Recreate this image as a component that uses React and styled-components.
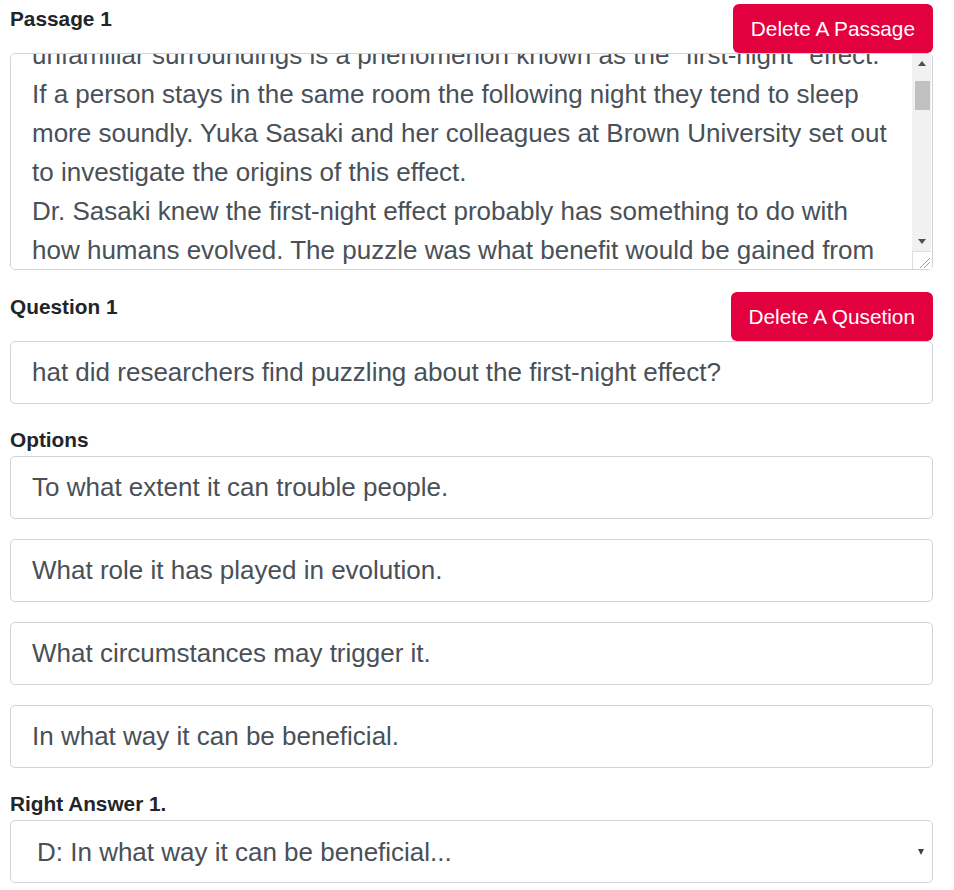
import React, { useLayoutEffect, useRef } from "react";
import styled, { createGlobalStyle } from "styled-components";

const GlobalStyle = createGlobalStyle`
  html, body {
    margin: 0;
    padding: 0;
    background: #ffffff;
  }
  body {
    font-family: "Liberation Sans", Arial, sans-serif;
    color: #212529;
  }
  * {
    box-sizing: border-box;
  }
`;

const passage = `Most of us have had a poor night's sleep in a hotel. Sleeping badly in unfamiliar surroundings is a phenomenon known as the "first-night" effect. If a person stays in the same room the following night they tend to sleep more soundly. Yuka Sasaki and her colleagues at Brown University set out to investigate the origins of this effect.
Dr. Sasaki knew the first-night effect probably has something to do with how humans evolved. The puzzle was what benefit would be gained from having disturbed sleep. The solution, she thought, might be related to another strange aspect of sleep that some animals display, in which half of the brain stays awake while the other half sleeps. Birds and dolphins are known to sleep this way, keeping one eye open so that they can watch out for danger.
Dr. Sasaki wondered whether something similar happens in people who sleep in a new place. To find out, she and her team recruited volunteers and recorded their brain activity while they slept in the laboratory on two nights, a week apart. They found that during the first night, a network of brain regions in the left hemisphere was more active than the same network in the right hemisphere. On the second night, the difference disappeared.
The team then played irregular beeps to the sleepers' ears. The left hemisphere responded more strongly to these sounds on the first night, and the volunteers were more likely to wake up and act quickly when the beeps were played to the right ear, which sends signals to the left side of the brain.
These results suggest that the left side of the brain stays partly awake on the first night in a new place, acting as a night watchman that keeps an eye out for anything unusual. Dr. Sasaki believes that this helps to explain why people feel so tired after a night away from home.`;

const options = [
  "To what extent it can trouble people.",
  "What role it has played in evolution.",
  "What circumstances may trigger it.",
  "In what way it can be beneficial.",
];

const Page = styled.main`
  width: 954px;
  padding: 4px 21px 0 10px;
`;

const HeaderRow = styled.div`
  display: flex;
  justify-content: space-between;
  align-items: flex-start;
`;

const Label = styled.label`
  display: block;
  font-size: 20.8px;
  font-weight: 700;
  color: #212529;
  line-height: ${(p) => (p.$tall ? "32px" : "30px")};
`;

const DangerButton = styled.button`
  height: 49px;
  padding: 0 18px;
  border: none;
  border-radius: 6px;
  background: #e3003f;
  color: #ffffff;
  font-family: "Liberation Sans", Arial, sans-serif;
  font-size: 20.8px;
  cursor: pointer;
`;

const PassageBox = styled.div`
  position: relative;
  margin: 0 0 22px;
`;

const PassageArea = styled.textarea`
  display: block;
  width: 100%;
  height: 217px;
  margin: 0;
  padding: 10px 40px 10px 21px;
  border: 1px solid #ced4da;
  border-radius: 5px;
  font-family: "Liberation Sans", Arial, sans-serif;
  font-size: 26px;
  line-height: 39px;
  color: #495057;
  resize: none;
  outline: none;
`;

/* classic scrollbar drawn over the textarea's right edge */
const Scrollbar = styled.div`
  position: absolute;
  top: 1px;
  right: 2px;
  bottom: 1px;
  width: 19px;
  display: flex;
  flex-direction: column;
  pointer-events: none;
`;

const ScrollButton = styled.div`
  height: 19px;
  flex: none;
  background: #f1f1f1;
  display: flex;
  align-items: center;
  justify-content: center;

  &::after {
    content: "";
    width: 0;
    height: 0;
    border-left: 4.5px solid transparent;
    border-right: 4.5px solid transparent;
    ${(p) =>
      p.$down
        ? "border-top: 5px solid #505050;"
        : "border-bottom: 5px solid #505050;"}
  }
`;

const Track = styled.div`
  flex: 1;
  background: #f1f1f1;
  padding: 8px 1px 0 3px;
`;

const Thumb = styled.div`
  height: 29px;
  background: #c1c1c1;
`;

const Corner = styled.div`
  height: 18px;
  flex: none;
  background: #ffffff;
  border-left: 1px solid #dedede;
  border-top: 1px solid #dedede;
  display: flex;
  align-items: flex-end;
  justify-content: flex-end;
`;

const TextField = styled.input`
  display: block;
  width: 100%;
  height: 63px;
  margin: 0 0 20px;
  padding: 0 21px;
  border: 1px solid #ced4da;
  border-radius: 5px;
  font-family: "Liberation Sans", Arial, sans-serif;
  font-size: 26px;
  color: #495057;
  background: #ffffff;
  outline: none;
`;

const SelectWrap = styled.div`
  position: relative;
`;

const Select = styled.select`
  display: block;
  width: 100%;
  height: 63px;
  margin: 0;
  padding: 0 30px 0 26px;
  border: 1px solid #ced4da;
  border-radius: 5px;
  font-family: "Liberation Sans", Arial, sans-serif;
  font-size: 26px;
  color: #495057;
  background: #ffffff;
  appearance: none;
  -webkit-appearance: none;
  outline: none;
`;

const SelectArrow = styled.span`
  position: absolute;
  right: 9px;
  top: 50%;
  margin-top: -3px;
  width: 0;
  height: 0;
  border-left: 3.5px solid transparent;
  border-right: 3.5px solid transparent;
  border-top: 6px solid #3c4046;
  pointer-events: none;
`;

export default function App() {
  const areaRef = useRef(null);

  useLayoutEffect(() => {
    if (areaRef.current) areaRef.current.scrollTop = 67;
  }, []);

  return (
    <Page>
      <GlobalStyle />
      <HeaderRow>
        <Label>Passage 1</Label>
        <DangerButton>Delete A Passage</DangerButton>
      </HeaderRow>
      <PassageBox>
        <PassageArea ref={areaRef} defaultValue={passage} />
        <Scrollbar aria-hidden="true">
          <ScrollButton />
          <Track>
            <Thumb />
          </Track>
          <ScrollButton $down />
          <Corner>
            <svg width="17" height="17" viewBox="0 0 17 17">
              <path d="M6 16 L16 6 M10 16 L16 10" stroke="#9c9c9c" strokeWidth="1" fill="none" />
            </svg>
          </Corner>
        </Scrollbar>
      </PassageBox>

      <HeaderRow>
        <Label>Question 1</Label>
        <DangerButton>Delete A Qusetion</DangerButton>
      </HeaderRow>
      <TextField defaultValue="hat did researchers find puzzling about the first-night effect?" />

      <Label $tall>Options</Label>
      {options.map((o) => (
        <TextField key={o} defaultValue={o} />
      ))}

      <Label $tall>Right Answer 1.</Label>
      <SelectWrap>
        <Select defaultValue="D">
          <option value="A">A: To what extent it can trouble people...</option>
          <option value="B">B: What role it has played in evolution...</option>
          <option value="C">C: What circumstances may trigger it...</option>
          <option value="D">D: In what way it can be beneficial...</option>
        </Select>
        <SelectArrow />
      </SelectWrap>
    </Page>
  );
}
